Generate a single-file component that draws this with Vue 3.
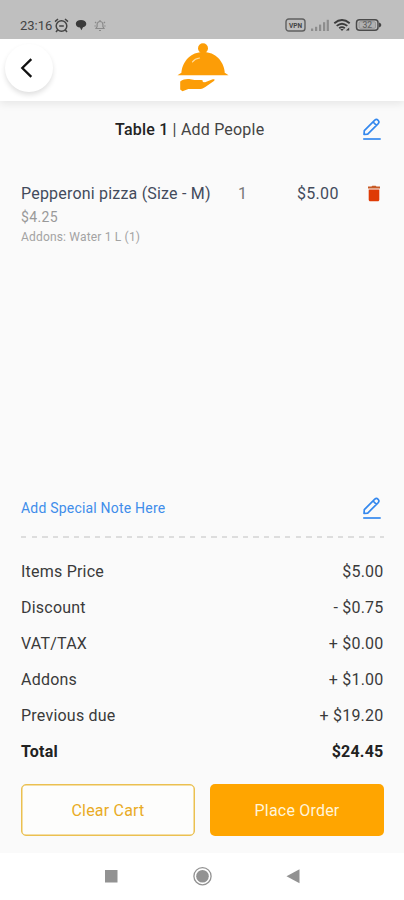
<script setup>
const summary = [
  { label: 'Items Price', value: '$5.00' },
  { label: 'Discount', value: '- $0.75' },
  { label: 'VAT/TAX', value: '+ $0.00' },
  { label: 'Addons', value: '+ $1.00' },
  { label: 'Previous due', value: '+ $19.20' },
  { label: 'Total', value: '$24.45', total: true },
]
</script>

<template>
  <div class="screen">
    <div class="status">
      <span class="time">23:16</span>
      <svg class="alarm" width="15" height="15" viewBox="0 0 15 15" fill="none" stroke="#444" stroke-width="1.5">
        <circle cx="7.5" cy="8" r="5.3" /><path d="M1 3.6 4 1M14 3.6 11 1M3.6 12 2 14M11.4 12 13 14M5.2 8h4.6" />
      </svg>
      <svg class="chat" width="12" height="12" viewBox="0 0 12 12" fill="#3b3b3b">
        <path d="M6 1C2.9 1 .8 2.4.8 4.8S2.6 8.4 5 8.6L6.4 11.3 8 8.3c2-.4 3.3-1.7 3.3-3.5C11.3 2.4 9 1 6 1Z" />
      </svg>
      <svg class="bell" width="12" height="13" viewBox="0 0 12 13" fill="none" stroke="#8a8a8a" stroke-width="1.2">
        <path d="M2 9.5h8L8.900 7.500V5.400a2.900 2.900 0 0 0-5.800 0v2.100ZM6 1v1.500M5 11.500h2M1 3l1.200 1M11 3 9.800 4M.4 7h1.400M10.200 7h1.400" />
      </svg>
      <span class="grow"></span>
      <svg width="98" height="16" viewBox="0 0 98 16">
        <rect x="1" y="2" width="19" height="12" rx="2.8" fill="none" stroke="#606060" stroke-width="1.4" />
        <text x="10.5" y="10.6" text-anchor="middle" class="vpn">VPN</text>
        <g fill="#8d8d8d">
          <rect x="26" y="11.5" width="2.2" height="2.5" /><rect x="30" y="9.8" width="2.2" height="4.2" /><rect x="34" y="7.6" width="2.2" height="6.4" /><rect x="38" y="5.2" width="2.2" height="8.8" /><rect x="41.7" y="2.8" width="2.2" height="11.2" />
        </g>
        <g fill="none" stroke="#3c3c3c" stroke-width="1.9">
          <path d="M49.3 6.2c4.800-4 10.600-4 15.400 0M51.700 8.900c3.300-2.800 7.300-2.800 10.600 0M54.200 11.300c1.800-1.500 3.800-1.500 5.600 0" />
        </g>
        <path d="m55.2 12 1.800 2 1.800-2ZM60.800 13.600l3.400-3.100v3.100Z" fill="#3c3c3c" />
        <rect x="71.5" y="2.7" width="21.5" height="10.6" rx="3" fill="none" stroke="#4b4b4b" stroke-width="1.5" />
        <rect x="74" y="4.7" width="16.5" height="6.6" rx="1.2" fill="#b1b1b1" stroke="#8c8c8c" stroke-width=".7" />
        <path d="M94 5.500c3 .8 3 4.200 0 5Z" fill="#444" />
        <text x="82.3" y="10.9" text-anchor="middle" class="bat">32</text>
      </svg>
    </div>

    <header class="header">
      <button class="back" aria-label="Back">
        <svg width="14" height="22" viewBox="0 0 14 22"><path d="M11.300 2.100 2.300 11l9 8.900" fill="none" stroke="#111" stroke-width="2.3" /></svg>
      </button>
      <svg class="logo" width="52" height="50" viewBox="0 0 52 50" fill="#fc9d07">
        <circle cx="26" cy="5.300" r="5" />
        <path d="M4.300 30.300C5.200 18 14 9 26.200 9S47 18 47.800 30.300Z" />
        <path d="M.5 32.200 4 30h44.200l3.300 2.200Z" />
        <path d="M3.200 38.500c3.300-2.300 6.500-2.700 10.300-2.200l4 .6h7c1.900.2 1.900 1.900.6 2.200l3 .1 7-2.700c2.200-.6 3.400.2 1.800 1.400L28.300 44c-2.500 1.700-4 2-7 2h-10l-5.800 2.300-2.300-1.800Z" />
        <path d="M15.500 18.900c1.700-2.300 4-3.500 7-3.900" fill="none" stroke="#ffdda0" stroke-width="1.2" stroke-linecap="round" />
      </svg>
    </header>

    <main class="main">
      <div class="table-row">
        <p class="table"><b>Table 1</b> | Add People</p>
        <svg class="pencil" width="20" height="23" viewBox="0 0 20 23" fill="none" stroke="#3488ee" stroke-width="1.7" stroke-linejoin="round">
          <path d="M2 16.500 2.300 12.700 12.800 2.200c1-.9 2.300-.9 3.300.1s1 2.300.1 3.300L5.700 16.100ZM11.100 4l3.300 3.300" /><path d="M1.200 21h17.500" />
        </svg>
      </div>

      <section class="item">
        <div class="item-name">
          <span class="name">Pepperoni pizza (Size - M)</span>
          <span class="unit">$4.25</span>
          <span class="addon">Addons: Water 1 L (1)</span>
        </div>
        <span class="qty">1</span>
        <span class="price">$5.00</span>
        <svg class="trash" width="14" height="17" viewBox="0 0 14 17">
          <path d="M1.700 4.500h10.600v10.200c0 .9-.7 1.500-1.500 1.500H3.200c-.8 0-1.500-.6-1.500-1.500Z" fill="#df3b05" /><path d="M1 1.600h3.500L5.300.7h3.400l.8.900H13v2H1Z" fill="#c75a25" />
        </svg>
      </section>

      <div class="note">
        <span class="note-text">Add Special Note Here</span>
        <svg class="pencil" width="20" height="23" viewBox="0 0 20 23" fill="none" stroke="#3488ee" stroke-width="1.7" stroke-linejoin="round">
          <path d="M2 16.500 2.300 12.700 12.800 2.200c1-.9 2.300-.9 3.300.1s1 2.300.1 3.300L5.700 16.100ZM11.100 4l3.300 3.300" /><path d="M1.200 21h17.500" />
        </svg>
      </div>
      <div class="dash"></div>

      <div class="summary">
        <div v-for="row in summary" :key="row.label" class="line" :class="{ total: row.total }">
          <span>{{ row.label }}</span><span class="value">{{ row.value }}</span>
        </div>
      </div>

      <div class="actions">
        <button class="btn outline">Clear Cart</button>
        <button class="btn solid">Place Order</button>
      </div>
    </main>

    <nav class="nav">
      <svg width="202" height="22" viewBox="0 0 202 22">
        <rect x="4" y="4" width="12.5" height="12.5" fill="#929292" />
        <circle cx="101.5" cy="10.2" r="8.6" fill="none" stroke="#929292" stroke-width="1.3" /><circle cx="101.5" cy="10.2" r="6.3" fill="#929292" />
        <path d="M185.500 10.200 198.500 3.200v14Z" fill="#929292" />
      </svg>
    </nav>
  </div>
</template>

<style>
body { margin: 0; background: #fff; }
</style>

<style scoped>
.screen { width: 404px; height: 900px; display: flex; flex-direction: column; overflow: hidden; background: #fff; font-family: Roboto, sans-serif; color: #3a3a3a; }
.screen * { box-sizing: border-box; }
.status { height: 39px; flex: none; background: #bfbfbf; display: flex; align-items: center; padding: 11px 21px 0 20px; }
.time { width: 34px; font-size: 13px; line-height: 16px; margin-top: 1px; color: #444; white-space: nowrap; }
.alarm { margin-left: 0; }
.chat { margin-left: 6px; }
.bell { margin-left: 7px; }
.grow { flex: 1; }
.vpn { font: 700 6.5px Roboto, sans-serif; fill: #444; }
.bat { font: 500 8.5px Roboto, sans-serif; fill: #666; }
.header { height: 62px; flex: none; background: #fff; display: flex; align-items: flex-start; padding: 5px 0 0 5px; box-shadow: 0 3px 8px rgba(0, 0, 0, .08); position: relative; z-index: 1; clip-path: inset(0 0 -14px 0); }
.back { width: 48px; height: 48px; border: 0; padding: 0 4px 0 0; border-radius: 50%; background: #fff; box-shadow: 0 3px 5px rgba(0, 0, 0, .12); display: flex; align-items: center; justify-content: center; }
.logo { margin: -1px 0 0 124px; }
.main { height: 752px; flex: none; background: #fafafa; padding: 0 20px 0 21px; display: flex; flex-direction: column; }
.table-row { height: 56px; display: flex; align-items: center; padding-left: 94px; justify-content: space-between; }
.table { margin: 2px 0 0; font-size: 16px; line-height: 20px; letter-spacing: .2px; color: #444; white-space: nowrap; }
.table b { font-weight: 500; color: #222; }
.pencil { margin-right: 2px; }
.item { height: 327px; padding-top: 27px; display: flex; align-items: flex-start; line-height: 20px; color: #434b5c; }
.item-name { width: 217px; display: flex; flex-direction: column; white-space: nowrap; }
.name { font-size: 16px; line-height: 20px; letter-spacing: .2px; }
.unit { font-size: 14px; line-height: 24px; margin-top: 1px; letter-spacing: .35px; color: #999; }
.addon { font-size: 12px; line-height: 16px; letter-spacing: .18px; color: #a3a3a3; }
.qty { width: 59px; font-size: 16px; color: #777; }
.price { width: 70px; font-size: 16px; letter-spacing: .3px; }
.trash { margin-top: 1px; }
.note { height: 48px; display: flex; justify-content: space-between; align-items: center; }
.note-text { color: #408dea; font-size: 14px; letter-spacing: .2px; }
.dash { height: 2px; margin-top: 4px; background: repeating-linear-gradient(90deg, #ddd 0 5.5px, transparent 5.5px 10.56px); }
.summary { margin-top: 15px; }
.line { height: 36px; display: flex; align-items: center; justify-content: space-between; font-size: 16px; letter-spacing: .22px; }
.value { margin-right: .5px; }
.total { font-weight: 700; color: #222; }
.actions { margin-top: 15px; display: flex; gap: 15px; }
.btn { width: 174px; height: 52px; border-radius: 5px; font: 16px Roboto, sans-serif; letter-spacing: .2px; padding: 0; }
.outline { background: #fdfdfc; border: 1.5px solid #ebc050; box-shadow: inset 0 0 0 .5px #ebc050; color: #e9ab25; }
.solid { background: #ffa500; border: 0; color: #fff4d9; }
.nav { height: 47px; display: flex; justify-content: center; align-items: center; }
</style>
